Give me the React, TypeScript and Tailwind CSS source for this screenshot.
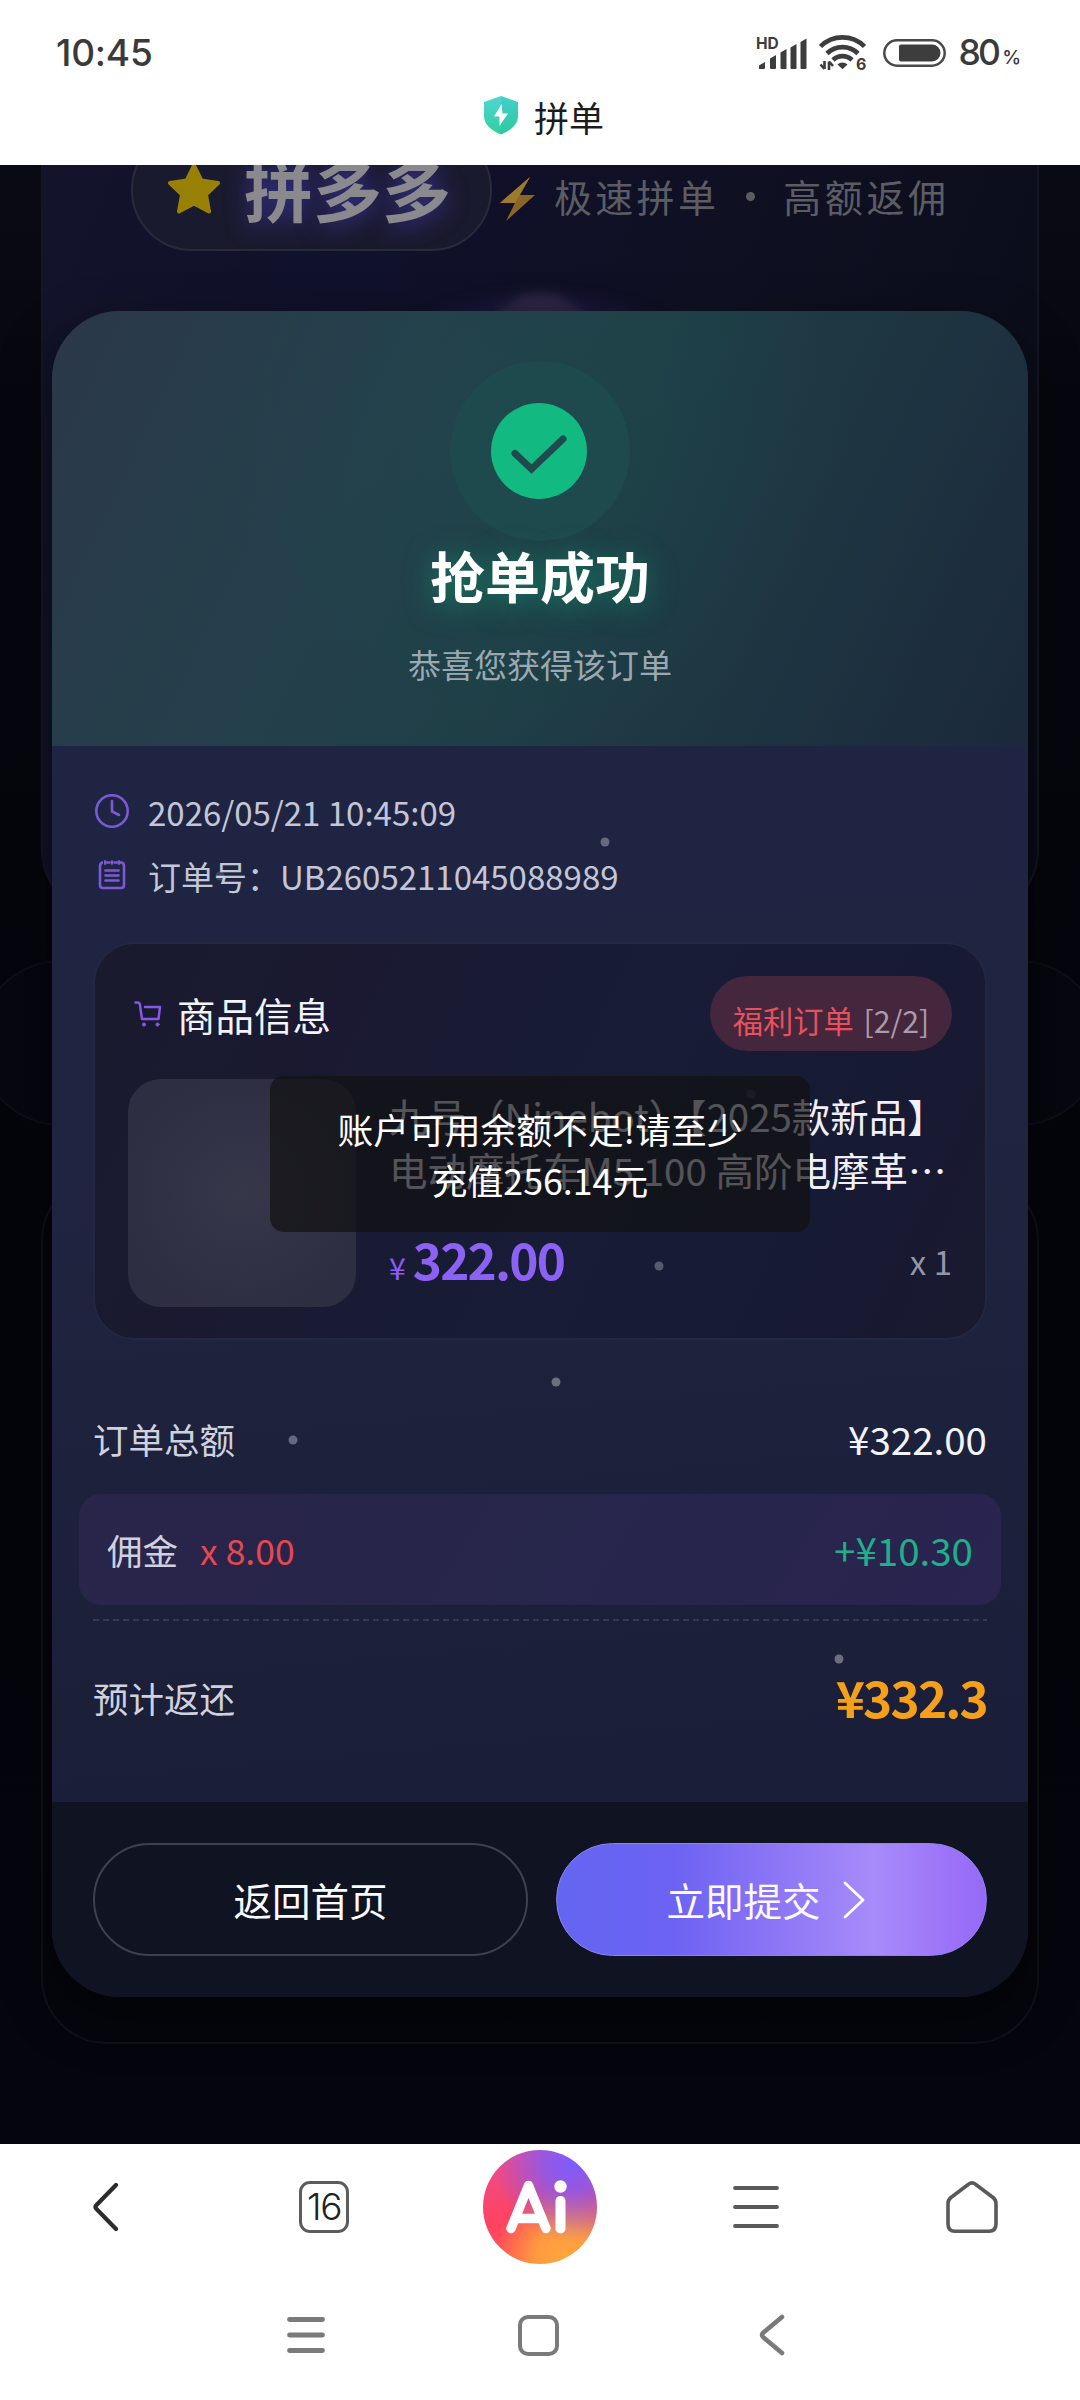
import React from "react";

const FONT = "font-['Noto_Sans_CJK_SC',sans-serif]";

/** Small particles floating over the page, as [left, top, opacity]. */
const PARTICLES: [number, number, number][] = [
  [605, 677, 0.32],
  [220, 711, 0.14],
  [751, 929, 0.12],
  [659, 1101, 0.28],
  [556, 1217, 0.35],
  [293, 1275, 0.32],
  [839, 1494, 0.36],
];

function StatusBar() {
  return (
    <div className="flex h-[104px] items-center justify-between pt-[1px] pl-[56px] pr-[60px] text-[#3a3a3a]">
      <span className="font-['Inter',sans-serif] text-[37px] leading-none font-medium tracking-[-0.2px]">10:45</span>
      <div className="flex items-center">
        <svg className="overflow-visible" width="52" height="34" viewBox="0 0 52 34" fill="#3d3d3d">
          <text x="0" y="13" fontSize="15.500" fontFamily="Inter" fontWeight="700">HD</text>
          <path d="M3 32.500v-3l6-3.500v6q0 1-1 1H4q-1 0-1-.5z" />
          <path d="M14 32V22.500l6-3.500v13q0 1-1 1h-4q-1 0-1-1z" />
          <path d="M24.500 32V16.500l6-3.500v19q0 1-1 1h-4q-1 0-1-1z" />
          <path d="M34.500 32V11.500l6-3.500v24q0 1-1 1h-4q-1 0-1-1z" />
          <path d="M44.500 32V6l6-3.500V32q0 1-1 1h-4q-1 0-1-1z" />
        </svg>
        <svg className="ml-[11px] overflow-visible" width="48" height="36" viewBox="0 0 48 36" fill="none" stroke="#3d3d3d" strokeWidth="4.600">
          <path d="M1.500 11.500A31 31 0 0 1 45.500 11.500" />
          <path d="M8 18.500A22 22 0 0 1 39 18.500" />
          <path d="M14 25A13.500 13.500 0 0 1 33 25" />
          <path d="M18.500 29.500a7 7 0 0 1 10 0l-5 4.700z" fill="#3d3d3d" stroke="none" />
          <path d="M5.500 26v8M5.500 34l-4-4.500M10 35v-8.500M10 26.500l4 4.500" strokeWidth="2.600" />
          <text x="37" y="34.500" fontSize="16" fontFamily="Inter" fontWeight="700" fill="#3d3d3d" stroke="none">6</text>
        </svg>
        <svg className="ml-[16px]" width="63" height="28" viewBox="0 0 63 28">
          <rect x="1.300" y="1.300" width="60.400" height="25.400" rx="12.700" fill="none" stroke="#4a4a4a" strokeWidth="2.500" />
          <path d="M18 5.500H49a8.500 8.500 0 0 1 0 17H18q-2 0-2-2v-13q0-2 2-2z" fill="#3d3d3d" />
        </svg>
        <span className="ml-[12px] font-['Inter',sans-serif] text-[35.500px] leading-none font-medium tracking-[-2.800px]">80</span>
        <span className="mt-[9px] ml-[4px] font-['Inter',sans-serif] text-[19px] leading-none font-medium tracking-[-1px]">%</span>
      </div>
    </div>
  );
}

function TitleBar() {
  return (
    <div className="flex h-[61px] items-start justify-center pl-[7px]">
      <svg className="-mt-[9px]" width="36" height="40" viewBox="0 0 36 40">
        <defs>
          <linearGradient id="shieldFill" x1="0" y1="0" x2="0" y2="1">
            <stop offset="0" stopColor="#4fd6d2" />
            <stop offset="1" stopColor="#2fcf9e" />
          </linearGradient>
        </defs>
        <path d="M18 1 35 7v14c0 8-7 14.500-17 18.500C8 35.500 1 29 1 21V7z" fill="url(#shieldFill)" />
        <path d="M18 1 35 7v14c0 8-7 14.500-17 18.500z" fill="#1fb5a5" opacity=".2" />
        <path d="M18.500 9 11 21.500h5.500L16.500 31 25 18.500h-5.500z" fill="#fff" />
      </svg>
      <span className="-mt-[13px] ml-[15px] text-[35px] leading-[52px] text-[#1c1c1c]">拼单</span>
    </div>
  );
}

function PageBehind() {
  return (
    <div className="absolute inset-0 overflow-hidden bg-[linear-gradient(180deg,#090a14_0%,#06070e_12%,#04050b_60%,#05060d_100%)]">
      <div className="mx-[41px] h-[751px] overflow-hidden rounded-b-[66px] border-2 border-t-0 border-[#151724] bg-[linear-gradient(112deg,#13132a_0%,#10112a_30%,#0f1022_55%,#090b16_100%)]">
        <div className="-mt-[36px] flex h-[122px] items-center pl-[88px]">
          <div className="flex h-full w-[361px] items-center rounded-full border-2 border-[#2a2a3c] bg-[#1a1a2e] pl-[34px]">
            <svg width="54" height="52" viewBox="0 0 54 52" className="-mt-[2px]">
              <path
                d="M27 2.500 34.300 17.500 51 20 39 31.500 42 48.500 27 40.500 12 48.500 15 31.500 3 20 19.700 17.500z"
                fill="#998006"
                stroke="#998006"
                strokeWidth="4"
                strokeLinejoin="round"
              />
            </svg>
            <span className="-mt-[6px] ml-[23px] text-[69px] leading-[80px] font-bold text-[#8a8a8e] [text-shadow:0_4px_22px_#37318a]">
              拼多多
            </span>
          </div>
          <svg className="mt-[18px] ml-[6px]" width="38" height="46" viewBox="0 0 38 46">
            <path d="M32 1 2 27h15L8 45 37 19H22z" fill="#8a6526" />
            <path d="M32 1 2 27h15z" fill="#9c7a2c" />
          </svg>
          <span className="mt-[11px] ml-[18px] text-[38px] leading-[52px] tracking-[3.300px] whitespace-pre text-[#5c5d64]">极速拼单</span>
          <span className="mt-[13px] ml-[27px] h-[9px] w-[9px] rounded-full bg-[#5c5d64]" />
          <span className="mt-[11px] ml-[28px] text-[38px] leading-[52px] tracking-[3.600px] text-[#5c5d64]">高额返佣</span>
        </div>
        <div className="mx-auto mt-[38px] h-[150px] w-[320px] rounded-full bg-[radial-gradient(ellipse_at_center,#281b4c_20%,#1b173c_50%,transparent_72%)] pt-[4px] blur-[5px]">
          <div className="mx-auto h-[130px] w-[110px] rounded-full bg-[#2d2543]" />
        </div>
      </div>
      <div className="-mx-[22px] mt-[44px] h-[166px] rounded-full border-2 border-[#0d0e17] bg-[#06070f]" />
      <div className="mx-[41px] mt-[49px] h-[869px] rounded-[66px] border-2 border-[#101119]" />
    </div>
  );
}

function ModalHeader() {
  return (
    <div className="flex h-[435px] flex-col items-center bg-[radial-gradient(circle_at_50%_32%,rgba(20,110,95,0.1),transparent_55%),linear-gradient(115deg,#2b384a_0%,#24404b_32%,#1f3f47_52%,#1e3441_75%,#1b293a_100%)]">
      <div className="mt-[50px] flex h-[180px] w-[180px] items-center justify-center rounded-full bg-[#1f4a4d] pr-[3px]">
        <svg width="96" height="96" viewBox="0 0 96 96">
          <circle cx="48" cy="48" r="48" fill="#12b981" />
          <path d="M24 50.500 40.500 66 72 36" fill="none" stroke="#1f4a4e" strokeWidth="7" strokeLinecap="round" />
        </svg>
      </div>
      <h1 className="mt-[-7px] text-[55px] leading-[80px] font-bold text-white [text-shadow:0_4px_28px_rgba(16,185,129,0.5)]">抢单成功</h1>
      <p className="mt-[26px] text-[33px] leading-[48px] text-[#9aa9b1]">恭喜您获得该订单</p>
    </div>
  );
}

function OrderMeta() {
  return (
    <div className="pl-[1px] text-[33px] leading-[64px] text-[#c3c6d6]">
      <div className="flex items-center">
        <svg width="36" height="36" viewBox="0 0 36 36" fill="none" stroke="#7c5ad6" strokeWidth="2.600" strokeLinecap="round">
          <circle cx="18" cy="18" r="15.700" />
          <path d="M18 8v10.500l7 3.500" />
        </svg>
        <span className="mt-[1px] -mb-[1px] ml-[18px]">2026/05/21 10:45:09</span>
      </div>
      <div className="flex items-center">
        <svg width="36" height="36" viewBox="0 0 36 36" fill="none" stroke="#7c5ad6" strokeWidth="2.600" strokeLinecap="round">
          <path d="M8 5.500H9q-3 0-3 4V28q0 3 3 3h18q3 0 3-3V9.500q0-4-3-4h-1M13 5.500h2.500M20.500 5.500H23" />
          <path d="M11 4v3M18 4v3M25 4v3" strokeWidth="2" />
          <path d="M11.500 13.500h13M11.500 18.500h13M11.500 23.500h13" />
        </svg>
        <span className="mt-[1px] -mb-[1px] ml-[18px]">订单号：UB2605211045088989</span>
      </div>
    </div>
  );
}

function ProductCard() {
  return (
    <div className="mt-[35px] h-[398px] rounded-[41px] border-2 border-[#232741] bg-[linear-gradient(115deg,#191a2e_0%,#1a1931_25%,#181c36_55%,#171a33_80%,#1a1930_100%)] px-[33px] pt-[32px]">
      <div className="flex h-[75px] items-center justify-between">
        <div className="flex items-center">
          <svg className="ml-[6px]" width="28" height="28" viewBox="0 0 28 28" fill="none" stroke="#8458e8" strokeWidth="2.500" strokeLinecap="round" strokeLinejoin="round">
            <path d="M1.500 2.500H4q1.500 0 1.800 1.500L8 19h16.500L26 7H11" />
            <circle cx="10" cy="24.500" r="1.600" fill="#8458e8" strokeWidth="1" />
            <circle cx="23.500" cy="24.500" r="1.600" fill="#8458e8" strokeWidth="1" />
          </svg>
          <span className="ml-[15px] text-[38.500px] leading-[56px] text-[#f3f3fb]">商品信息</span>
        </div>
        <div className="flex h-[75px] w-[242px] justify-center rounded-full bg-[#44263d] pt-[22px] text-[30.250px] leading-[44px] whitespace-pre">
          <span className="text-[#e8505b]">福利订单 </span>
          <span className="ml-[3px] text-[#a99aac]">[2/2]</span>
        </div>
      </div>
      <div className="mt-[28px] flex">
        <div className="h-[228px] w-[228px] shrink-0 rounded-[33px] bg-[radial-gradient(circle_at_50%_50%,#37374a_0%,#2d2e42_75%)]" />
        <div className="ml-[33px] min-w-0 flex-1 pt-[9px]">
          <div className="text-[38.500px] leading-[54px] whitespace-nowrap text-[#f0effa]">
            <div>九号（Ninebot）【2025款新品】</div>
            <div>电动摩托车M5 100 高阶电摩革…</div>
          </div>
          <div className="mt-[33px] flex h-[60px] items-baseline leading-[60px]">
            <span className="text-[30.250px] text-[#8b5cf6]">¥</span>
            <span className="ml-[7px] text-[49.500px] font-bold tracking-[-1.800px] text-[#8b62f4]">322.00</span>
            <span className="relative -top-[5px] ml-auto text-[33px] text-[#9395a8]">x 1</span>
          </div>
        </div>
      </div>
    </div>
  );
}

function Totals() {
  return (
    <div className="mt-[43px] text-[35.500px] text-[#cfd1de]">
      <div className="flex h-[111px] items-center justify-between">
        <span>订单总额</span>
        <span className="text-[38.500px] text-[#f3f3fa]">¥322.00</span>
      </div>
      <div className="-mx-[14px] flex h-[111px] items-center rounded-[22px] bg-[linear-gradient(120deg,#2a2449_0%,#27264b_50%,#2a2450_100%)] px-[28px]">
        <span>佣金</span>
        <span className="ml-[22px] text-[#e5484f]">x 8.00</span>
        <span className="ml-auto text-[38.500px] text-[#1db08a]">+¥10.30</span>
      </div>
      <div className="mt-[14px] h-[2px] bg-[repeating-linear-gradient(90deg,#363a53_0_6px,transparent_6px_10px)]" />
      <div className="flex h-[153px] items-center justify-between">
        <span>预计返还</span>
        <span className="text-[49.500px] font-bold tracking-[-1.800px] text-[#f5a01a]">¥332.3</span>
      </div>
    </div>
  );
}

function ModalFooter() {
  return (
    <div className="flex h-[195px] gap-[28px] bg-[#101321] pt-[41px] pr-[41px] pl-[41px] text-[38.500px] text-[#fafaff]">
      <button className="h-[113px] w-[435px] rounded-full border-2 border-[#3f414d]">返回首页</button>
      <button className="flex h-[113px] w-[431px] items-center justify-center rounded-full border border-[#8f80f0] bg-[linear-gradient(90deg,#6366f1_0%,#6d62f3_27%,#8b75f5_50%,#a78bfa_74%,#9b72f8_92%,#966af6_100%)] pr-[10px]">
        <span>立即提交</span>
        <svg className="ml-[20px]" width="26" height="38" viewBox="0 0 26 38" fill="none" stroke="#fff" strokeWidth="2.800" strokeLinecap="round" strokeLinejoin="round">
          <path d="M4 2 22 19 4 36" />
        </svg>
      </button>
    </div>
  );
}

function OrderModal() {
  return (
    <div className="relative mx-[52px] mt-[146px] overflow-hidden rounded-[68px] bg-[linear-gradient(175deg,#20253f_0%,#202444_22%,#1f2440_50%,#1b1f38_80%,#191d39_100%)] shadow-[0_20px_50px_rgba(0,0,0,0.5)]">
      <ModalHeader />
      <div className="h-[1056px] px-[41px] pt-[33px]">
        <OrderMeta />
        <ProductCard />
        <Totals />
      </div>
      <ModalFooter />
    </div>
  );
}

function Toast() {
  return (
    <div className="absolute top-[911px] left-[270px] flex h-[156px] w-[540px] flex-col justify-center rounded-[14px] bg-[rgba(17,17,17,0.7)] text-center text-[35.750px] leading-[51px] text-white">
      <div>账户可用余额不足!请至少</div>
      <div>充值256.14元</div>
    </div>
  );
}

function BrowserBar() {
  return (
    <div className="flex h-[126px] items-center bg-white">
      <svg className="ml-[92px]" width="28" height="50" viewBox="0 0 28 50" fill="none" stroke="#2c2c2c" strokeWidth="4.200" strokeLinecap="round" strokeLinejoin="round">
        <path d="M24 3 4.500 23q-2 2 0 4L24 47" />
      </svg>
      <div className="ml-[179px] flex h-[52px] w-[50px] items-center justify-center rounded-[11px] border-[3.500px] border-[#5c5c5c] font-['Inter',sans-serif] text-[37px] font-light tracking-[-1.500px] text-[#222]">
        16
      </div>
      <div className="relative ml-[134px] flex h-[114px] w-[114px] items-center justify-center rounded-full bg-[radial-gradient(circle_at_78%_12%,#7c5cff_0%,rgba(124,92,255,0.75)_22%,transparent_58%),radial-gradient(circle_at_72%_95%,#ffa63d_0%,rgba(255,166,61,0.85)_22%,transparent_52%),linear-gradient(160deg,#e84d95_0%,#ff4360_50%,#ff5d4a_100%)]">
        <svg className="mr-[6px]" width="66" height="56" viewBox="0 0 66 56" fill="none" stroke="#fff" strokeWidth="9.500" strokeLinecap="round" strokeLinejoin="round">
          <path d="M7 49.500 24.500 6.500 42 49.500M13 39.500H36" />
          <path d="M56.500 22V49.500" strokeWidth="10" />
          <circle cx="56.500" cy="7.500" r="6.200" fill="#fff" stroke="none" />
        </svg>
      </div>
      <svg className="ml-[135px]" width="48" height="44" viewBox="0 0 48 44" stroke="#5a5a5a" strokeWidth="3.800" strokeLinecap="round">
        <path d="M3 3h42M3 22h42M3 41h42" />
      </svg>
      <svg className="ml-[166px]" width="52" height="54" viewBox="0 0 52 54" fill="none" stroke="#5a5a5a" strokeWidth="3.600" strokeLinejoin="round">
        <path d="M22.500 4.200q3.500-2.800 7 0L47 17.500q3 2.400 3 6V44q0 7.200-7 7.200H9Q2 51.200 2 44V23.500q0-3.600 3-6z" />
      </svg>
    </div>
  );
}

function SystemBar() {
  return (
    <div className="flex h-[130px] items-center bg-white">
      <svg className="ml-[286px]" width="40" height="38" viewBox="0 0 40 38" stroke="#7a7a7a" strokeWidth="4.800" strokeLinecap="round">
        <path d="M3.500 3.500h33M3.500 19h33M3.500 34.500h33" />
      </svg>
      <div className="ml-[192px] h-[41px] w-[41px] rounded-[10px] border-[4.500px] border-[#7a7a7a]" />
      <svg className="ml-[199px]" width="28" height="42" viewBox="0 0 28 42" fill="none" stroke="#7a7a7a" strokeWidth="4.600" strokeLinecap="round" strokeLinejoin="round">
        <path d="M24 3 5.500 18.500q-3 2.500 0 5L24 39" />
      </svg>
    </div>
  );
}

export default function App() {
  return (
    <div className={`flex h-[2400px] w-[1080px] flex-col overflow-hidden bg-white ${FONT}`}>
      <header className="h-[165px] shrink-0 bg-white">
        <StatusBar />
        <TitleBar />
      </header>
      <main className="relative h-[1979px] shrink-0 overflow-hidden bg-[#05060e]">
        <PageBehind />
        <div className="relative flow-root">
          <OrderModal />
        </div>
        {PARTICLES.map(([x, y, o]) => (
          <span
            key={`${x}-${y}`}
            className="absolute h-[9px] w-[9px] -translate-x-1/2 -translate-y-1/2 rounded-full bg-white"
            style={{ left: x, top: y, opacity: o }}
          />
        ))}
        <Toast />
      </main>
      <BrowserBar />
      <SystemBar />
    </div>
  );
}
